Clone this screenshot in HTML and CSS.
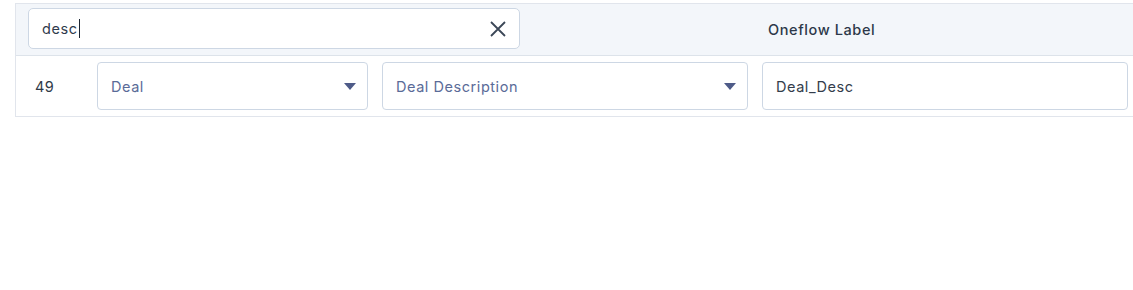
FILE: index.html
```html
<!DOCTYPE html>
<html>
<head>
<meta charset="utf-8">
<link rel="stylesheet" href="styles.css">
</head>
<body>
<div class="table">
  <div class="head">
    <div class="search-cell">
      <div class="search">
        <span class="search-text">desc</span><span class="caret"></span>
        <svg class="clear" width="18" height="18" viewBox="0 0 18 18"><path d="M2 2 L16 16 M16 2 L2 16" stroke="#3b4757" stroke-width="1.8" fill="none"/></svg>
      </div>
    </div>
    <div class="head-label">Oneflow Label</div>
  </div>
  <div class="row">
    <div class="num">49</div>
    <div class="cell"><div class="select"><span>Deal</span><svg class="tri" width="12" height="7" viewBox="0 0 12 7"><path d="M0 0 H12 L6 7 Z" fill="#4e5b88"/></svg></div></div>
    <div class="cell"><div class="select"><span>Deal Description</span><svg class="tri" width="12" height="7" viewBox="0 0 12 7"><path d="M0 0 H12 L6 7 Z" fill="#4e5b88"/></svg></div></div>
    <div class="cell"><div class="input">Deal_Desc</div></div>
  </div>
</div>
</body>
</html>
```

FILE: styles.css
```css
html, body {
  margin: 0;
  padding: 0;
  background: #ffffff;
  overflow: hidden;
}
body {
  font-family: "Inter", "Open Sans", sans-serif;
  font-size: 14.5px;
  color: #333d4b;
}
.table {
  margin: 3px 0 0 15px;
  width: 1130px;
  border-left: 1px solid #e1e5ec;
  border-top: 1px solid #e1e5ec;
}
.head {
  display: grid;
  grid-template-columns: 739px 1fr;
  background: #f3f6fa;
  border-bottom: 1px solid #dde3ea;
  height: 51px;
}
.search-cell {
  display: flex;
  align-items: flex-start;
  padding: 4px 0 0 12px;
}
.search {
  width: 492px;
  height: 41px;
  box-sizing: border-box;
  border: 1px solid #cdd7e4;
  border-radius: 5px;
  background: #fff;
  display: flex;
  align-items: center;
  padding: 0 12px 0 13px;
}
.search-text {
  color: #2f3b4c;
  letter-spacing: 0.6px;
}
.caret {
  display: inline-block;
  width: 1px;
  height: 19px;
  background: #1b2533;
  margin-left: 1px;
}
.clear {
  margin-left: auto;
}
.head-label {
  display: flex;
  align-items: center;
  padding-left: 13px;
  font-weight: 500;
  color: #2c3849;
  letter-spacing: 0.6px;
}
.row {
  display: grid;
  grid-template-columns: 74px 285px 380px 380px;
  height: 60px;
  border-bottom: 1px solid #e1e5ec;
  align-items: center;
}
.num {
  padding-left: 19px;
  color: #2f3a48;
  letter-spacing: 0.5px;
}
.cell {
  padding: 0 7px;
}
.select, .input {
  height: 48px;
  box-sizing: border-box;
  border: 1px solid #cdd7e4;
  border-radius: 4px;
  display: flex;
  align-items: center;
  padding: 0 11px 0 13px;
  letter-spacing: 0.55px;
}
.select {
  color: #5a6b98;
}
.input {
  color: #333d4b;
}
.tri {
  margin-left: auto;
}
```
